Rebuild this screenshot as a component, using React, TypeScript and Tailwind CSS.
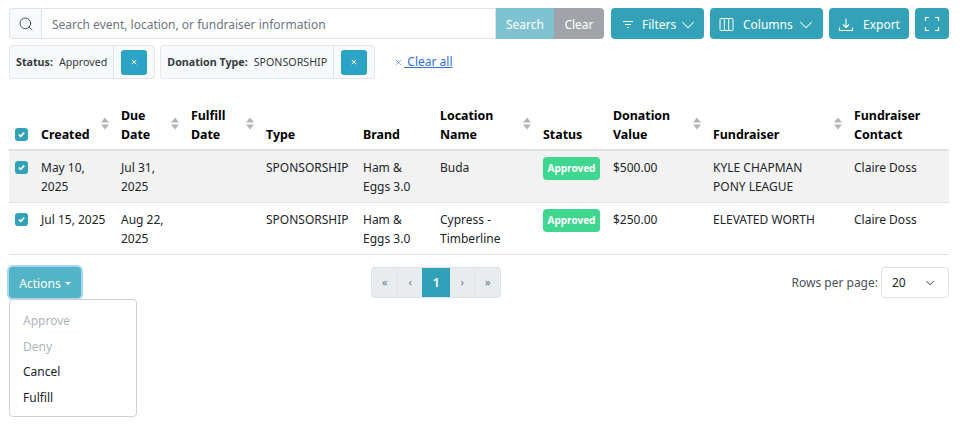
import { ChevronDown, Search, X } from "lucide-react";

function ColumnsIcon() {
  return (
    <svg width="15" height="15" viewBox="0 0 15 15" fill="none" stroke="currentColor" strokeWidth="1">
      <rect x="1" y="1.5" width="13" height="12" rx="1" />
      <path d="M5.3 1.5v12M9.7 1.5v12" />
    </svg>
  );
}

function FilterIcon() {
  return (
    <svg width="12" height="10" viewBox="0 0 12 10" fill="none" stroke="currentColor" strokeWidth="1.1">
      <path d="M1 1.5h10M3 4.5h6M5 7.5h2" />
    </svg>
  );
}

function ExportIcon() {
  return (
    <svg width="16" height="16" viewBox="0 0 16 16" fill="none" stroke="currentColor" strokeWidth="1.1">
      <path d="M8 1.5v9M5 7.5l3 3 3-3M1.5 10.5v3h13v-3" />
    </svg>
  );
}

function FullscreenIcon() {
  return (
    <svg width="16" height="16" viewBox="0 0 16 16" fill="none" stroke="currentColor" strokeWidth="1.1">
      <path d="M1.5 5V1.5H5M11 1.5h3.5V5M14.5 11v3.5H11M5 14.5H1.5V11" />
    </svg>
  );
}

function SortArrows() {
  return (
    <svg width="8" height="13" viewBox="0 0 8 13" className="absolute right-[4px] top-[17px]" fill="#b4b4b4">
      <path d="M4 0.5l4 5H0zM4 12.5L0 7.5h8z" />
    </svg>
  );
}

function Checkbox() {
  return (
    <span className="flex h-[13px] w-[13px] items-center justify-center rounded-[3px] bg-[#33a2b8]">
      <svg width="9" height="9" viewBox="0 0 9 9" fill="none" stroke="white" strokeWidth="1.6">
        <path d="M1.8 4.6l1.9 1.8 3.5-3.8" />
      </svg>
    </span>
  );
}

function Chip({ label, value }: { label: string; value: string }) {
  return (
    <div className="flex h-[34px] items-stretch rounded-[3px] border border-[#e3e6ea] bg-[#f8f9fa] text-[10.7px] text-[#343a40]">
      <div className="flex items-center gap-[6px] pl-[6px] pr-[6px]">
        <span className="font-bold">{label}</span>
        <span>{value}</span>
      </div>
      <div className="flex items-center border-l border-[#dee2e6] px-[7px]">
        <span className="flex h-[25px] w-[26px] items-center justify-center rounded-[3px] bg-[#2aa3c4] text-white">
          <X size={8} strokeWidth={3} />
        </span>
      </div>
    </div>
  );
}

function Th({ children, w, sort }: { children: React.ReactNode; w: string; sort?: boolean }) {
  return (
    <th className={`relative ${w} pb-[5px] pl-2 pr-1 pt-[6px] align-bottom text-left text-[12.4px] font-bold text-black`}>
      {children}
      {sort && <SortArrows />}
    </th>
  );
}

function Td({ children }: { children?: React.ReactNode }) {
  return <td className="pb-[6px] pl-2 pr-1 pt-[7px] align-top">{children}</td>;
}

function Badge() {
  return (
    <span className="mt-[-1px] flex h-[23px] w-[57px] items-center justify-center rounded-[4px] bg-[#3fd68f] text-[10px] font-bold text-white">
      Approved
    </span>
  );
}

const rows = [
  {
    created: "May 10, 2025",
    due: "Jul 31, 2025",
    location: "Buda",
    value: "$500.00",
    fundraiser: ["KYLE CHAPMAN", "PONY LEAGUE"],
    shaded: true,
  },
  {
    created: "Jul 15, 2025",
    due: "Aug 22, 2025",
    location: "Cypress - Timberline",
    value: "$250.00",
    fundraiser: ["ELEVATED WORTH"],
    shaded: false,
  },
];

export default function App() {
  return (
    <div className="h-[429px] w-[962px] overflow-hidden bg-white pl-[9px] pr-[13px] pt-[8px] font-['Noto_Sans',sans-serif] text-[12px] text-[#212529]">
      <div className="flex h-[31px] items-stretch">
        <div className="flex w-[33px] items-center justify-center rounded-l-[4px] border border-[#dee2e6] bg-[#f8f9fa] text-[#495057]">
          <Search size={16} strokeWidth={1.5} />
        </div>
        <div className="flex w-[454px] items-center border-y border-r border-[#dee2e6] pl-[10px] pt-[2px] text-[#6c757d]">
          Search event, location, or fundraiser information
        </div>
        <div className="flex w-[58px] items-center justify-center bg-[#7fc3d0] pt-[2px] text-white">Search</div>
        <div className="flex w-[50px] items-center justify-center rounded-r-[4px] bg-[#a0a4a8] pt-[2px] text-white">Clear</div>
        <div className="ml-[7px] flex w-[93px] items-center gap-[8px] rounded-[4px] bg-[#33a2b8] pl-[11px] pt-[2px] text-white">
          <FilterIcon />
          <span>Filters</span>
          <ChevronDown size={22} strokeWidth={1.1} className="ml-[-7px]" />
        </div>
        <div className="ml-[6px] flex w-[113px] items-center gap-[9px] rounded-[4px] bg-[#33a2b8] pl-[9px] pt-[2px] text-white">
          <ColumnsIcon />
          <span>Columns</span>
          <ChevronDown size={22} strokeWidth={1.1} className="ml-[-7px]" />
        </div>
        <div className="ml-[6px] flex w-[80px] items-center gap-[9px] rounded-[4px] bg-[#33a2b8] pl-[9px] pt-[2px] text-white">
          <ExportIcon />
          <span>Export</span>
        </div>
        <div className="ml-[6px] flex w-[34px] items-center justify-center rounded-[4px] bg-[#33a2b8] text-white">
          <FullscreenIcon />
        </div>
      </div>

      <div className="mt-[6px] flex items-center gap-[5px]">
        <Chip label="Status:" value="Approved" />
        <Chip label="Donation Type:" value="SPONSORSHIP" />
        <div className="ml-[14px] flex items-center text-[#2f6fe0]">
          <X size={9} strokeWidth={1.5} />
          <span className="ml-[1px] whitespace-pre underline"> Clear all</span>
        </div>
      </div>

      <table className="mt-[21px] w-[940px] table-fixed border-collapse leading-[19px]">
        <thead>
          <tr className="border-b-2 border-[#dee2e6]">
            <th className="w-[24px] pb-[8px] pl-[6px] align-bottom">
              <Checkbox />
            </th>
            <Th w="w-[80px]" sort>Created</Th>
            <Th w="w-[70px]" sort>Due<br />Date</Th>
            <Th w="w-[75px]" sort>Fulfill<br />Date</Th>
            <Th w="w-[97px]">Type</Th>
            <Th w="w-[77px]">Brand</Th>
            <Th w="w-[103px]" sort>Location<br />Name</Th>
            <Th w="w-[70px]">Status</Th>
            <Th w="w-[100px]" sort>Donation<br />Value</Th>
            <Th w="w-[141px]" sort>Fundraiser</Th>
            <Th w="w-[103px]">Fundraiser<br />Contact</Th>
          </tr>
        </thead>
        <tbody>
          {rows.map((r) => (
            <tr key={r.created} className={`border-b border-[#dee2e6] ${r.shaded ? "bg-[#f2f2f2]" : ""}`}>
              <td className="pl-[6px] pt-[10px] align-top">
                <Checkbox />
              </td>
              <Td>{r.created}</Td>
              <Td>{r.due}</Td>
              <Td />
              <Td>SPONSORSHIP</Td>
              <Td>Ham & Eggs 3.0</Td>
              <Td>{r.location}</Td>
              <Td><Badge /></Td>
              <Td>{r.value}</Td>
              <Td>
                {r.fundraiser.map((line) => (
                  <div key={line}>{line}</div>
                ))}
              </Td>
              <Td>Claire Doss</Td>
            </tr>
          ))}
        </tbody>
      </table>

      <div className="relative mt-[12px] flex h-[31px] items-center justify-between">
        <div className="relative">
          <div className="flex h-[31px] w-[72px] items-center justify-center gap-[4px] rounded-[4px] bg-[#52b4c6] pt-[2px] text-white shadow-[0_0_0_2px_#a6d4f2]">
            Actions
            <span className="h-0 w-0 border-x-[3px] border-t-[3px] border-x-transparent border-t-white" />
          </div>
          <div className="absolute left-0 top-[32px] z-10 flex h-[118px] w-[128px] flex-col rounded-[4px] border border-[#d0d0d0] bg-white pl-[13px] pt-[8px] leading-[25.7px]">
            <span className="text-[#adb5bd]">Approve</span>
            <span className="text-[#adb5bd]">Deny</span>
            <span>Cancel</span>
            <span>Fulfill</span>
          </div>
        </div>
        <div className="flex h-[31px] w-[130px] overflow-hidden rounded-[4px] border border-[#dee2e6] bg-[#e9ecef] text-[11px] text-[#6c757d]">
          <span className="flex w-[26px] items-center justify-center border-r border-[#dee2e6]">«</span>
          <span className="flex w-[24px] items-center justify-center">‹</span>
          <span className="flex w-[28px] items-center justify-center bg-[#2fa1b8] text-[13px] font-semibold text-white">1</span>
          <span className="flex w-[25px] items-center justify-center border-r border-[#dee2e6]">›</span>
          <span className="flex flex-1 items-center justify-center">»</span>
        </div>
        <div className="flex items-center gap-[3px]">
          <span className="text-[#495057]">Rows per page:</span>
          <div className="flex h-[31px] w-[68px] items-center justify-between rounded-[4px] border border-[#dee2e6] pl-[10px] pr-[11px]">
            <span>20</span>
            <ChevronDown size={14} strokeWidth={1.5} />
          </div>
        </div>
      </div>
    </div>
  );
}
